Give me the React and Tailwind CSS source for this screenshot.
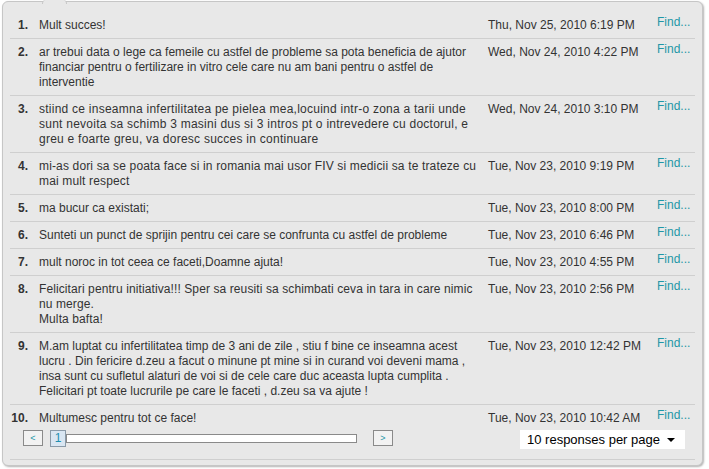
import React from "react";

// line breaks and tracking follow the original rendering (hinted Arial is a bit wider)
const RESPONSES = [
    { text: "Mult succes!", date: "Thu, Nov 25, 2010 6:19 PM" },
    {
        text: "ar trebui data o lege ca femeile cu astfel de probleme sa pota beneficia de ajutor financiar pentru o fertilizare in vitro cele care nu am bani pentru o astfel de interventie",
        date: "Wed, Nov 24, 2010 4:22 PM",
    },
    {
        text: "stiind ce inseamna infertilitatea pe pielea mea,locuind intr-o zona a tarii unde\nsunt nevoita sa schimb 3 masini dus si 3 intros pt o intrevedere cu doctorul, e\ngreu e foarte greu, va doresc succes in continuare",
        date: "Wed, Nov 24, 2010 3:10 PM",
        wide: "tracking-[0.25px]",
    },
    {
        text: "mi-as dori sa se poata face si in romania mai usor FIV si medicii sa te trateze cu\nmai mult respect",
        date: "Tue, Nov 23, 2010 9:19 PM",
        wide: "tracking-[0.15px]",
    },
    { text: "ma bucur ca existati;", date: "Tue, Nov 23, 2010 8:00 PM" },
    {
        text: "Sunteti un punct de sprijin pentru cei care se confrunta cu astfel de probleme",
        date: "Tue, Nov 23, 2010 6:46 PM",
    },
    { text: "mult noroc in tot ceea ce faceti,Doamne ajuta!", date: "Tue, Nov 23, 2010 4:55 PM" },
    {
        text: "Felicitari pentru initiativa!!! Sper sa reusiti sa schimbati ceva in tara in care nimic\nnu merge.\nMulta bafta!",
        date: "Tue, Nov 23, 2010 2:56 PM",
        wide: "tracking-[0.1px]",
    },
    {
        text: "M.am luptat cu infertilitatea timp de 3 ani de zile , stiu f bine ce inseamna acest\nlucru . Din fericire d.zeu a facut o minune pt mine si in curand voi deveni mama ,\ninsa sunt cu sufletul alaturi de voi si de cele care duc aceasta lupta cumplita .\nFelicitari pt toate lucrurile pe care le faceti , d.zeu sa va ajute !",
        date: "Tue, Nov 23, 2010 12:42 PM",
    },
    { text: "Multumesc pentru tot ce face!", date: "Tue, Nov 23, 2010 10:42 AM" },
];

function ResponseRow({ index, item, last }) {
    return (
        <div
            className={
                last
                    ? "flex pt-[6px] pb-[4px] leading-[15px]"
                    : "flex pt-[6px] pb-[5px] leading-[15px] border-b border-[#cfcfcf]"
            }
        >
            <div className="w-[18px] shrink-0 text-right font-bold text-[#333]">{index}.</div>
            <div
                className={`w-[441px] shrink-0 ml-[11px] whitespace-pre-line text-[#333] ${item.wide || ""}`}
            >
                {item.text}
            </div>
            <div className="w-[162px] shrink-0 ml-[8px] text-[#333]">{item.date}</div>
            <a href="#" className="ml-[7px] -mt-[3px] text-[#1f97a7]">
                Find...
            </a>
        </div>
    );
}

export default function App() {
    return (
        <div className="bg-white w-[709px] h-[469px] pt-[1px] pl-[2px] font-['Liberation_Sans',Arial,sans-serif] text-[12px]">
            <div className="relative w-[701px] h-[465px] bg-[#e8e8e8] border border-[#c6c6c6] rounded-[6px] shadow-[1px_1px_2px_rgba(0,0,0,0.3)] px-[7px] pt-[10px]">
                {/* notch where the panel joins the tab above */}
                <div className="absolute -top-[2px] left-[39px] w-[25px] h-[4px] bg-[#e8e8e8] border-l border-r border-[#c6c6c6] rounded-t-[4px]" />

                {RESPONSES.map((item, i) => (
                    <ResponseRow
                        key={i}
                        index={i + 1}
                        item={item}
                        last={i === RESPONSES.length - 1}
                    />
                ))}

                <div className="flex items-start h-[30px] border-b border-[#cfcfcf]">
                    <button className="ml-[13px] w-[20px] h-[16px] border border-[#8a8a8a] bg-[#f2f2f2] text-[#1f97a7] text-[9px] leading-[14px] flex items-center justify-center">
                        &lt;
                    </button>
                    <div className="ml-[7px] flex items-center">
                        <div className="w-[16px] h-[17px] border border-[#8a9aa8] bg-[#d9e6f2] text-[#1f8fb0] text-[12px] leading-[15px] flex items-center justify-center">
                            1
                        </div>
                        <div className="w-[291px] h-[9px] bg-white border border-[#8a8a8a]" />
                    </div>
                    <button className="ml-[16px] w-[20px] h-[16px] border border-[#8a8a8a] bg-[#f2f2f2] text-[#1f97a7] text-[9px] leading-[14px] flex items-center justify-center">
                        &gt;
                    </button>
                    <div className="ml-[127px] w-[165px] h-[19px] bg-white flex items-center justify-between pl-[7px] pr-[10px] text-[13px] text-black">
                        <span>10 responses per page</span>
                        <svg width="8" height="4" viewBox="0 0 8 4">
                            <path d="M0 0 H8 L4 4 Z" fill="#000" />
                        </svg>
                    </div>
                </div>
            </div>
        </div>
    );
}
